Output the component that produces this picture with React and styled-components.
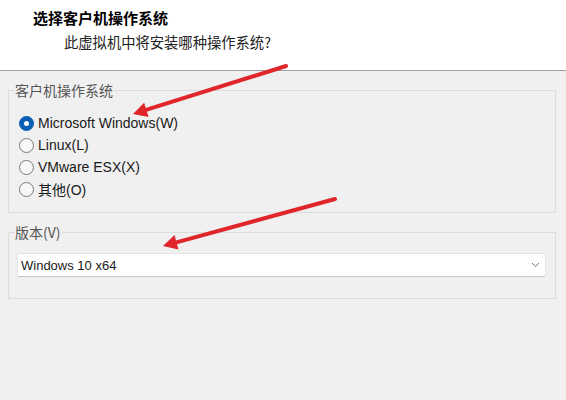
import React from 'react'
import styled, { createGlobalStyle } from 'styled-components'

const GlobalStyle = createGlobalStyle`
    html, body {
        margin: 0;
        padding: 0;
        background: #f0f0f0;
    }
`

const Page = styled.div`
    position: relative;
    width: 566px;
    height: 400px;
    overflow: hidden;
    background: #f0f0f0;
    font-family: "Liberation Sans", "Noto Sans CJK SC", sans-serif;
    color: #1a1a1a;
`

const Header = styled.header`
    height: 71px;
    box-sizing: border-box;
    background: #ffffff;
    border-bottom: 1px solid #a0a0a0;
    padding: 8px 0 0 33px;
    font-family: "Noto Sans CJK SC", sans-serif;
    h1 {
        margin: 0;
        font-size: 15px;
        line-height: 19px;
        font-weight: 700;
        color: #000;
    }
    p {
        margin: 5px 0 0 31px;
        font-size: 14.3px;
        line-height: 19px;
        color: #222;
    }
`

const Body = styled.div`
    padding: 10px 10px 0 8px;
    display: flex;
    flex-direction: column;
    gap: 10px;
`

const Group = styled.fieldset`
    margin: 0;
    padding: 0;
    border: 1px solid #dcdcdc;
    min-width: 0;
    legend {
        margin-left: 5px;
        padding: 0 1px;
        font-family: "Noto Sans CJK SC", sans-serif;
        font-size: 14px;
        line-height: 18px;
        color: #555;
    }
`

const GroupInner = styled.div`
    padding: ${p => p.$pad};
`

const RadioList = styled.div`
    display: flex;
    flex-direction: column;
`

const RadioRow = styled.label`
    display: flex;
    align-items: center;
    gap: 4px;
    height: 22px;
    font-size: 14px;
    color: #1a1a1a;
`

const Dot = styled.span`
    box-sizing: border-box;
    width: 15px;
    height: 15px;
    border-radius: 50%;
    flex-shrink: 0;
    display: flex;
    align-items: center;
    justify-content: center;
    background: ${p => (p.$on ? '#0a5fb4' : '#f7f7f7')};
    border: 1px solid ${p => (p.$on ? '#0a5fb4' : '#7a7a7a')};
    &::after {
        content: '';
        display: ${p => (p.$on ? 'block' : 'none')};
        width: 5px;
        height: 5px;
        border-radius: 50%;
        background: #fff;
    }
`

const Combo = styled.div`
    box-sizing: border-box;
    height: 24px;
    display: flex;
    align-items: center;
    justify-content: space-between;
    padding: 0 5px 0 3px;
    background: #ffffff;
    border: 1px solid #e3e3e3;
    border-bottom-color: #c8c8c8;
    border-radius: 2px;
    font-size: 13px;
    color: #1a1a1a;
`

const Overlay = styled.svg`
    position: absolute;
    left: 0;
    top: 0;
    pointer-events: none;
`

const Arrow = ({ x1, y1, x2, y2 }) => {
    const dx = x2 - x1
    const dy = y2 - y1
    const len = Math.hypot(dx, dy)
    const ux = dx / len
    const uy = dy / len
    const bx = x2 - ux * 14
    const by = y2 - uy * 14
    const px = -uy * 7.5
    const py = ux * 7.5
    return (
        <g>
            <line x1={x1} y1={y1} x2={bx + ux * 2} y2={by + uy * 2} stroke="#e0252b" strokeWidth="4" strokeLinecap="round" />
            <polygon points={`${x2},${y2} ${bx + px},${by + py} ${bx - px},${by - py}`} fill="#e0252b" />
        </g>
    )
}

const options = [
    { label: 'Microsoft Windows(W)', on: true },
    { label: 'Linux(L)' },
    { label: 'VMware ESX(X)' },
    { label: '其他(O)' },
]

const App = () => {
    return (
        <Page>
            <GlobalStyle />
            <Header>
                <h1>选择客户机操作系统</h1>
                <p>此虚拟机中将安装哪种操作系统?</p>
            </Header>
            <Body>
                <Group>
                    <legend>客户机操作系统</legend>
                    <GroupInner $pad="13px 10px 12px 10px">
                        <RadioList>
                            {options.map(o => (
                                <RadioRow key={o.label}>
                                    <Dot $on={o.on} />
                                    {o.label}
                                </RadioRow>
                            ))}
                        </RadioList>
                    </GroupInner>
                </Group>
                <Group>
                    <legend>版本(V)</legend>
                    <GroupInner $pad="12px 9px 21px 8px">
                        <Combo>
                            <span>Windows 10 x64</span>
                            <svg width="9" height="6" viewBox="0 0 9 6">
                                <path d="M1 1 L4.5 4.5 L8 1" fill="none" stroke="#777" strokeWidth="1" />
                            </svg>
                        </Combo>
                    </GroupInner>
                </Group>
            </Body>
            <Overlay width="566" height="400" viewBox="0 0 566 400">
                <Arrow x1={286} y1={66} x2={133} y2={114} />
                <Arrow x1={335} y1={199} x2={163} y2={246} />
            </Overlay>
        </Page>
    )
}

export default App
